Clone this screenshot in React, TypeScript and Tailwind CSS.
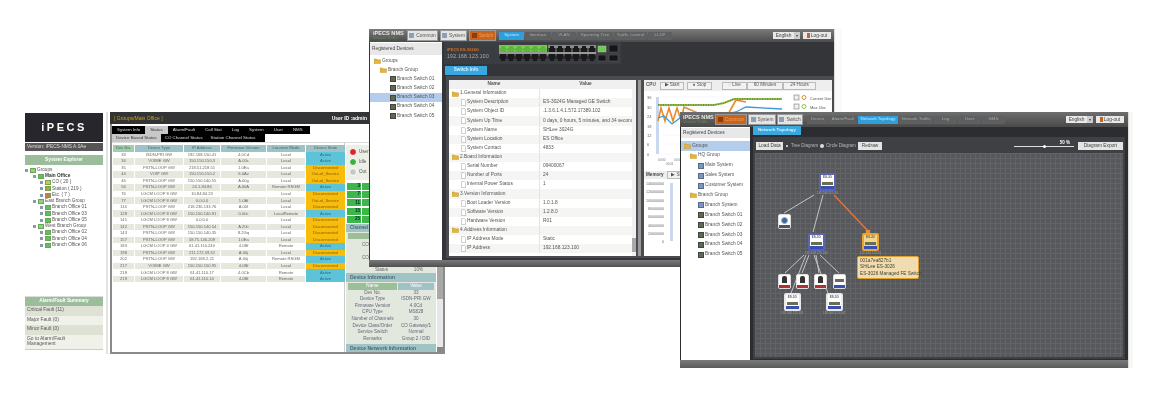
import React from "react";

const Folder = () => (
  <svg width="7" height="6" viewBox="0 0 7 6" className="shrink-0">
    <path d="M0 1h2.5l.6.8H6.5V5.6H0z" fill="#e2b63e" stroke="#b58a20" strokeWidth=".4" />
  </svg>
);
const Doc = () => (
  <svg width="5" height="7" viewBox="0 0 5 7" className="shrink-0">
    <path d="M.4.4H3.3L4.6 1.7V6.6H.4z" fill="#fff" stroke="#999" strokeWidth=".5" />
  </svg>
);
const SwitchIcon = () => <span className="w-[6px] h-[6px] shrink-0 bg-[#5b6b4e] border border-[#444]" />;
const SysIcon = () => <span className="w-[6px] h-[6px] shrink-0 bg-[#7b94c2] border border-[#5a6b8a]" />;
const Sq = ({ c }: { c: string }) => <span className={`w-[6px] h-[5px] shrink-0 border border-[#6aa55a] ${c}`} />;

const rows: [string, string, string, string, string, string][] = [
  ["33", "ISDN-PRI GW", "192.168.150.41", "4.0Cd", "Local", "Active"],
  ["34", "VOIME GW", "150.150.150.3", "A.00c", "Local", "Active"],
  ["35", "PSTN-LOOP GW", "218.51.218.51", "1.0Ea", "Local", "Disconnected"],
  ["44", "VOIP GW", "150.150.150.2", "6.0Av", "Local", "Out-of_Service"],
  ["46", "PSTN-LOOP GW", "150.150.140.55", "A.00g", "Local", "Out-of_Service"],
  ["56", "PSTN-LOOP GW", "24.1.84.86", "A.00A", "Remote RSGM", "Active"],
  ["76", "LGCM LOOP 8 GW", "10.84.84.23", "", "Local", "Disconnected"],
  ["77", "LGCM LOOP 8 GW", "0.0.0.0", "1.0Af", "Local", "Out-of_Service"],
  ["114", "PSTN-LOOP GW", "218.236.133.76", "A.00I", "Local", "Disconnected"],
  ["128", "LGCM LOOP 8 GW", "150.150.140.91", "0.00c", "LocalRemote", "Active"],
  ["141", "LGCM LOOP 8 GW", "0.0.0.0", "", "Local", "Disconnected"],
  ["142", "PSTN-LOOP GW", "150.150.140.54", "A.2Gr", "Local", "Disconnected"],
  ["143", "PSTN-LOOP GW", "150.150.140.35", "8.2Gq", "Local", "Disconnected"],
  ["157", "PSTN-LOOP GW", "58.75.146.209", "1.0Ea", "Local", "Disconnected"],
  ["183", "LGCM LOOP 4 GW", "61.41.110.240", "4.0Bf", "Remote", "Active"],
  ["198", "PSTN-LOOP GW", "211.172.59.32", "A.00j", "Local", "Disconnected"],
  ["202", "PSTN-LOOP GW", "192.168.2.21", "A.00j", "Remote RSGM", "Active"],
  ["217", "VOIME GW", "150.150.150.95", "4.0Bf", "Local", "Disconnected"],
  ["218", "LGCM LOOP 8 GW", "61.41.110.17", "4.0Cb", "Remote", "Active"],
  ["219", "LGCM LOOP 8 GW", "61.41.110.14", "4.0Bf", "Remote", "Active"],
];

const treeOne: [number, string, string][] = [
  [0, "Groups", "bg-[#8fd07a]"],
  [8, "Main Office", "bg-[#5fc05f]"],
  [15, "CO ( 20 )", "bg-[#e8c030]"],
  [15, "Station ( 219 )", "bg-[#c89a30]"],
  [15, "Etc. ( 7 )", "bg-[#d07a30]"],
  [8, "East Branch Group", "bg-[#8fd07a]"],
  [15, "Branch Office 01", "bg-[#5fc05f]"],
  [15, "Branch Office 03", "bg-[#5fc05f]"],
  [15, "Branch Office 05", "bg-[#5fc05f]"],
  [8, "West Branch Group", "bg-[#8fd07a]"],
  [15, "Branch Office 02", "bg-[#5fc05f]"],
  [15, "Branch Office 04", "bg-[#5fc05f]"],
  [15, "Branch Office 06", "bg-[#5fc05f]"],
];

function WindowOne() {
  const stateCls: Record<string, string> = {
    Active: "bg-[#5cc3d8] text-[#2a6a80]",
    Disconnected: "bg-[#f8bd0c] text-[#8a5a00]",
    "Out-of_Service": "bg-[#f8bd0c] text-[#8a5a00]",
  };
  return (
    <div className="absolute left-[25px] top-[112px] w-[420px] h-[242px] flex text-[4.6px] leading-none text-[#666]">
      <div className="w-[78px] flex flex-col pt-px">
        <div className="h-[29px] bg-[#26262c] flex items-center justify-center">
          <span className="text-[11px] tracking-[2.5px] font-bold text-white">iPECS</span>
        </div>
        <div className="mt-px h-[8px] bg-[#555] text-[#ddd] flex items-center px-[2px] text-[4.8px]">Version: iPECS-NMS A.0Ae</div>
        <div className="mt-[4px] h-[10px] bg-[#9cbd9c] text-white font-bold flex items-center justify-center text-[4.8px]">System Explorer</div>
        <div className="mt-[2px] flex flex-col">
          {treeOne.map(([ind, t, c]) => (
            <div key={t} className="h-[6.25px] flex items-center gap-[2px] text-[4.7px] text-[#555]">
              <span style={{ width: ind }} className="shrink-0 -mr-[2px]" />
              <span className="w-[3px] h-[3px] bg-[#89a] shrink-0" />
              <Sq c={c} />
              <span className={t === "Main Office" ? "font-bold text-[#333] -ml-px" : "-ml-px"}>{t}</span>
            </div>
          ))}
        </div>
        <div className="mt-auto mb-[4px] flex flex-col">
          <div className="h-[10px] bg-[#9cbd9c] text-white font-bold flex items-center justify-center text-[4.8px] border-t border-[#ddd]">Alarm/Fault Summary</div>
          <div className="h-[9.5px] bg-[#dde2d4] flex items-center px-[2px] text-[4.9px] text-[#555]">Critical Fault (11)</div>
          <div className="h-[9.5px] bg-[#f0f2ea] flex items-center px-[2px] text-[4.9px] text-[#555]">Major Fault (0)</div>
          <div className="h-[9.5px] bg-[#dde2d4] flex items-center px-[2px] text-[4.9px] text-[#555]">Minor Fault (0)</div>
          <div className="h-[15.5px] bg-[#f0f2ea] flex items-center px-[2px] text-[4.9px] text-[#555] border-b border-[#ccc]">Go to Alarm/Fault<br />Management</div>
        </div>
      </div>
      <div className="ml-[3px] w-[2px] bg-[#e2e2e2]" />
      <div className="ml-[2px] flex-1 border-2 border-[#8a8a8a] border-t-0 flex flex-col bg-white">
        <div className="h-[12px] -mx-[2px] bg-[#333435] flex items-center justify-between pl-[4px] pr-[78px] text-[5px] shrink-0">
          <span className="text-[#c9a020]">[ Groups/Main Office ]</span>
          <span className="text-white font-bold">User ID :admin</span>
        </div>
        <div className="mt-[2px] w-[198px] h-[8px] bg-black text-[#ddd] flex items-center text-[4.4px] shrink-0">
          {["System Info", "Status", "Alarm/Fault", "Call Stat", "Log", "System", "User", "NMS"].map((t) => (
            <span key={t} className={`h-full flex items-center px-[5px] ${t === "Status" ? "bg-[#c8c8c8] text-[#333]" : ""}`}>{t}</span>
          ))}
        </div>
        <div className="w-[153px] h-[8px] bg-black text-[#ddd] flex items-center text-[4.4px] shrink-0">
          {["Device Based Status", "CO Channel Status", "Station Channel Status"].map((t, i) => (
            <span key={t} className={`h-full flex items-center px-[4px] ${i === 0 ? "bg-[#c8c8c8] text-[#333]" : ""}`}>{t}</span>
          ))}
        </div>
        <div className="flex flex-1 border-t border-[#ddd] min-h-0">
          <div className="w-[233px] pl-[1px] pt-[2px] border-r border-[#ccc] text-[4.1px]">
            <div className="grid grid-cols-[21px_48px_36px_45px_38px_39px] gap-x-px text-center">
              {["Dev No.", "Device Type", "IP Address", "Firmware Version", "Location Mode", "Device State"].map((h, i) => (
                <div key={h} className={`h-[6.5px] flex items-center justify-center text-[#3f6a6a] ${i === 0 ? "bg-[#a5cba8]" : "bg-[#9fc2c6]"}`}>{h}</div>
              ))}
              {rows.map((r, idx) =>
                r.map((c, i) => (
                  <div
                    key={idx + "-" + i}
                    className={`h-[6.55px] flex items-center justify-center ${i === 5 ? stateCls[c] : idx % 2 ? "bg-[#e6e7dd]" : "bg-white"}`}
                  >
                    {c}
                  </div>
                ))
              )}
            </div>
          </div>
          <div className="flex-1 bg-white flex min-w-0">
            <div className="flex-1 flex flex-col text-[4.6px] px-[1px] min-w-0">
              <div className="mt-[2px] h-[35px] bg-[#ecefe6] flex flex-col gap-[2px] pl-[3px] pt-[3px] text-[#555] shrink-0">
                <div className="flex items-center gap-[2px]"><span className="w-[8px] h-[8px] rounded-full bg-[#d8262e] border border-white" />User</div>
                <div className="flex items-center gap-[2px]"><span className="w-[8px] h-[8px] rounded-full bg-[#3cb03c] border border-white" />Idle</div>
                <div className="flex items-center gap-[2px]"><span className="w-[8px] h-[8px] rounded-full bg-[#c8c8c8] border border-white" />Out</div>
              </div>
              <div className="mt-[3px] h-[41px] flex flex-col gap-[1.2px] shrink-0">
                {["3", "7", "11", "15", "25"].map((n) => (
                  <div key={n} className="flex gap-px pl-px">
                    <span className="w-[14px] h-[7px] bg-[#3cb84a] text-[#124] flex items-center justify-end pr-px font-bold">{n}</span>
                    <span className="w-[14px] h-[7px] bg-[#3cb84a]" />
                  </div>
                ))}
              </div>
              <div className="h-[8px] bg-[#a0c3c6] flex items-center px-[4px] font-bold text-[#4a6a70] shrink-0">Channel Status</div>
              <div className="h-[41px] bg-[#e2e8de] pt-[1px] flex flex-col shrink-0">
                <div className="h-[6px] mx-[2px] bg-[#9dbf98]" />
                <div className="flex-1 pl-[16px] pt-[4px] flex flex-col justify-between">
                  <span>CO</span><span>CO</span>
                  <span className="flex justify-around"><span>Status</span><span>10%</span></span>
                </div>
              </div>
              <div className="h-[9px] bg-[#a0c3c6] flex items-center px-[4px] font-bold text-[#4a6a70] text-[5px] shrink-0">Device Information</div>
              <div className="flex-1 bg-[#e2e8de] pt-[1px] px-[2px] flex flex-col text-[4.6px] text-[#667]">
                <div className="grid grid-cols-[49px_1fr] gap-x-px">
                  <span className="h-[6.6px] bg-[#9dbf98] text-center text-white leading-[6.6px]">Name</span>
                  <span className="h-[6.6px] bg-[#9fc2c6] text-center text-white leading-[6.6px]">Value</span>
                  {[
                    ["Dev No.", "33"], ["Device Type", "ISDN-PRI GW"], ["Firmware Version", "4.0Cd"], ["CPU Type", "MS828"],
                    ["Number of Channels", "30"], ["Device Class/Order", "CO Gateway/1"], ["Service Switch", "Normal"], ["Remarks", "Group 2 / DID"],
                  ].map(([a, b]) => (
                    <React.Fragment key={a}>
                      <span className="h-[6.6px] text-center leading-[6.6px]">{a}</span>
                      <span className="h-[6.6px] text-center leading-[6.6px]">{b}</span>
                    </React.Fragment>
                  ))}
                </div>
              </div>
              <div className="h-[8px] bg-[#a0c3c6] flex items-center px-[4px] font-bold text-[#4a6a70] text-[5px] shrink-0">Device Network Information</div>
            </div>
            <div className="w-[6px] bg-[#e8e8e8] flex flex-col justify-between">
              <div className="h-[150px] bg-[#a8a8a8] mt-[6px]" />
              <div className="h-[5px] bg-[#888]" />
            </div>
          </div>
        </div>
      </div>
    </div>
  );
}

function DarkTab({ children, active, className = "" }: { children: React.ReactNode; active?: boolean; className?: string }) {
  return (
    <span className={`h-[8px] flex items-center justify-center text-[4.4px] ${active ? "bg-[#2f9fdc] text-[#bfe8ff]" : "bg-[#5d5f61] text-[#a8a8a8]"} ${className}`}>
      {children}
    </span>
  );
}
function MainTab({ label, kind, className = "" }: { label: string; kind: "orange" | "light"; className?: string }) {
  return (
    <span
      className={`h-[11px] flex items-center justify-center gap-[2px] text-[4.8px] border border-[#999] ${kind === "orange" ? "bg-[#c8641c] text-[#f0a060]" : "bg-[#e4e4e2] text-[#555]"} ${className}`}
    >
      <span className={`w-[5px] h-[5px] ${kind === "orange" ? "bg-[#8a3e10]" : "bg-[#8aa0b8]"}`} />
      {label}
    </span>
  );
}
function Lang() {
  return (
    <div className="flex items-center gap-[3px] text-[4.8px] text-[#444]">
      <span className="flex h-[7px]">
        <span className="w-[21px] bg-[#e8e8e8] flex items-center justify-center">English</span>
        <span className="w-[6px] bg-[#ccc] flex items-center justify-center text-[4px]">▾</span>
      </span>
      <span className="w-[28px] h-[7px] bg-[#e8e8e8] flex items-center justify-center gap-[1px]">
        <span className="w-[3px] h-[5px] bg-[#c8641c]" />Log-out
      </span>
    </div>
  );
}

const infoRows: [number, string, string][] = [
  [0, "1.General Information", ""],
  [1, "System Description", "ES-3024G Managed GE Switch"],
  [1, "System Object ID", ".1.3.6.1.4.1.572.17389.102"],
  [1, "System Up Time", "0 days, 0 hours, 5 minutes, and 34 seconds"],
  [1, "System Name", "SHLee 3024G"],
  [1, "System Location", "ES Office"],
  [1, "System Contact", "4833"],
  [0, "2.Board Information", ""],
  [1, "Serial Number", "09400067"],
  [1, "Number of Ports", "24"],
  [1, "Internal Power Status", "1"],
  [0, "3.Version Information", ""],
  [1, "Boot Loader Version", "1.0.1.8"],
  [1, "Software Version", "1.2.8.0"],
  [1, "Hardware Version", "R01"],
  [0, "4.Address Information", ""],
  [1, "IP Address Mode", "Static"],
  [1, "IP Address", "192.168.123.100"],
];

function Ports() {
  return (
    <svg width="120" height="17" viewBox="0 0 120 17" className="shrink-0">
      <rect x="0" y="0" width="48" height="7" fill="#7cc850" />
      <rect x="49" y="0" width="48" height="7" fill="#8a8a8a" />
      <rect x="0" y="7" width="97" height="2" fill="#9a9a9a" />
      <rect x="0" y="9" width="97" height="1.5" fill="#8a8a8a" />
      {[0, 9].map((y, r) =>
        Array.from({ length: 12 }).map((_, i) => {
          const x = i * 8 + (i >= 6 ? 1 : 0);
          const green = r === 0 && i < 6;
          return (
            <path
              key={r + "-" + i}
              d={r === 0 ? `M${x + 0.5} ${y + 7}V${y + 3}h1.5v-2h4v2h1.5v4z` : `M${x + 0.5} ${y}V${y + 5}h1.5v2h4v-2h1.5v-5z`}
              fill={green ? "#5cb83a" : "#1a1a1c"}
            />
          );
        })
      )}
      <rect x="99" y="1" width="8" height="6" fill="#6ccc50" stroke="#bbb" strokeWidth=".5" />
      <rect x="110" y="0" width="9" height="7" fill="#16161a" stroke="#666" strokeWidth=".5" />
      <rect x="99" y="10" width="8" height="6" fill="#16161a" stroke="#666" strokeWidth=".5" />
      <rect x="110" y="10" width="9" height="6" fill="#16161a" stroke="#666" strokeWidth=".5" />
    </svg>
  );
}

function ToolBtn({ children, className = "" }: { children: React.ReactNode; className?: string }) {
  return <span className={`h-[8px] flex items-center justify-center gap-[1px] border border-[#bbb] bg-[#f2f2f2] text-[4.6px] text-[#555] ${className}`}>{children}</span>;
}

function WindowTwo() {
  const tree: [number, string, boolean][] = [
    [4, "Groups", true], [10, "Branch Group", true], [20, "Branch Switch 01", false], [20, "Branch Switch 02", false],
    [20, "Branch Switch 03", false], [20, "Branch Switch 04", false], [20, "Branch Switch 05", false],
  ];
  return (
    <div className="absolute left-[369px] top-[29px] w-[473px] h-[238px] flex flex-col bg-[#333538]">
      <div className="h-[13px] bg-gradient-to-b from-[#7c7c7c] to-[#4c4c4c] flex items-center pl-[4px] pr-[11px] shrink-0">
        <div className="w-[34px] flex flex-col leading-none">
          <span className="text-[5.6px] font-bold text-[#e8e8e8]">iPECS NMS</span>
          <span className="text-[4px] text-[#5e8a4e]">Version 8.0Ac</span>
        </div>
        <div className="flex items-center gap-[2px]">
          <MainTab label="Common" kind="light" className="w-[31px]" />
          <MainTab label="System" kind="light" className="w-[27px]" />
          <MainTab label="Switch" kind="orange" className="w-[27px]" />
        </div>
        <div className="ml-[3px] flex items-center gap-[1px]">
          <DarkTab active className="w-[25px]">System</DarkTab>
          <DarkTab className="w-[26px]">Interface</DarkTab>
          <DarkTab className="w-[24px]">VLAN</DarkTab>
          <DarkTab className="w-[36px]">Spanning Tree</DarkTab>
          <DarkTab className="w-[33px]">Traffic Control</DarkTab>
          <DarkTab className="w-[24px]">LLDP</DarkTab>
        </div>
        <div className="ml-auto"><Lang /></div>
      </div>
      <div className="flex-1 flex min-h-0">
        <div className="w-[72px] ml-px bg-white flex flex-col text-[4.8px] text-[#555] leading-none shrink-0">
          <div className="h-[12px] mt-px bg-[#e8e8e8] flex items-center px-[2px] text-[#444]">Registered Devices</div>
          <div className="flex flex-col pt-[1.5px]">
            {tree.map(([ind, t, f], i) => (
              <div key={t} style={{ paddingLeft: ind }} className={`h-[9.15px] flex items-center gap-[1px] ${i === 4 ? "bg-[#b4cdec]" : ""}`}>
                {f ? <Folder /> : <SwitchIcon />}
                {t}
              </div>
            ))}
          </div>
        </div>
        <div className="flex-1 flex flex-col min-w-0 pr-[8px]">
          <div className="h-[22px] ml-[2px] w-[177px] bg-[#3a3e42] flex items-center pl-[3px] pr-[2px] justify-between shrink-0">
            <div className="flex flex-col gap-[2px] leading-none">
              <span className="text-[4px] text-[#d0702a] font-bold">iPECS ES-3024G</span>
              <span className="text-[5px] text-[#b0b0b0] tracking-[.3px]">192.168.123.100</span>
            </div>
            <Ports />
          </div>
          <div className="mt-[2px] ml-[3px] w-[42px] h-[9px] bg-[#3aa8e0] text-[#d8f0ff] text-[4.6px] font-bold flex items-center justify-center shrink-0">Switch Info</div>
          <div className="flex-1 ml-[4px] mt-[1px] mb-[2px] bg-[#4a4c4f] pt-[4px] pr-[2px] pb-[2px] pl-[3px] flex min-h-0">
            <div className="w-[187px] bg-white relative text-[4.8px] leading-none text-[#555] pr-[4px] flex flex-col shrink-0">
              <div className="h-[9px] grid grid-cols-[90px_1fr] bg-[#f0f0f0] font-bold text-center items-center">
                <span>Name</span><span>Value</span>
              </div>
              {infoRows.map(([k, n, v], i) => (
                <div key={n} className={`h-[9.14px] grid grid-cols-[90px_1fr] items-center ${i % 2 ? "bg-[#f5f5f3]" : "bg-white"}`}>
                  <span className="flex items-center gap-[1px] pl-[3px]">
                    {k === 0 ? <Folder /> : <span className="pl-[9px] flex items-center"><Doc /></span>}
                    {n}
                  </span>
                  <span className="pl-[3px] border-l border-[#e4e4e4] h-full flex items-center">{v}</span>
                </div>
              ))}
              <div className="absolute right-0 top-0 bottom-0 w-[4px] bg-[#f0f0f0] flex flex-col justify-end">
                <div className="h-[14px] bg-[#a8a8a8] mb-[4px]" />
              </div>
            </div>
            <div className="ml-[2px] w-[3px] bg-[#9a9a9a] shrink-0" />
            <div className="ml-[3px] flex-1 bg-white flex flex-col min-w-0 text-[4.6px] text-[#555] leading-none">
              <div className="h-[11px] bg-[#eee] flex items-center pl-[2px] shrink-0">
                <span className="w-[13px] font-bold">CPU</span>
                <ToolBtn className="w-[24px] ml-px">▶ Start</ToolBtn>
                <ToolBtn className="w-[25px] ml-[3px]">● Stop</ToolBtn>
                <ToolBtn className="w-[25px] ml-[10px] bg-[#c4c4c4]">◌ Live</ToolBtn>
                <ToolBtn className="w-[36px]">60 Minutes</ToolBtn>
                <ToolBtn className="w-[33px]">24 Hours</ToolBtn>
              </div>
              <div className="h-[80px] relative shrink-0">
                <svg width="190" height="80" viewBox="0 0 190 80" className="absolute inset-0">
                  {[6, 16, 25, 35, 44, 53, 63].map((y, i) => (
                    <g key={y}>
                      <line x1="18" x2="140" y1={y} y2={y} stroke="#eef" strokeWidth=".6" />
                      <text x="3" y={y + 2} fontSize="4" fill="#666">{["36", "30", "24", "18", "12", "6", "0"][i]}</text>
                    </g>
                  ))}
                  <rect x="12" y="6" width="3" height="57" fill="#c9d8ee" />
                  <polyline points="14,14 70,14 80,12 90,8 138,8" fill="none" stroke="#8fc040" strokeWidth="2" />
                  <polyline points="14,14 70,14 80,12 90,8 138,8" fill="none" stroke="#222" strokeWidth=".6" strokeDasharray="1 1.5" />
                  <polyline points="14,30 17,17 21,30 25,17 29,30 33,17 37,29 40,16 70,29 82,27 92,9 102,11" fill="none" stroke="#e88a28" strokeWidth="1.6" />
                  <polyline points="14,27 20,25 28,33 36,27 60,27 92,21 102,16 138,18" fill="none" stroke="#3a9ad8" strokeWidth="1.3" />
                  <rect x="150" y="4" width="5" height="5" fill="#eee" stroke="#666" strokeWidth=".5" />
                  <circle cx="160" cy="6.5" r="2" fill="none" stroke="#e88a28" />
                  <text x="166" y="8.5" fontSize="4" fill="#555">Current Use</text>
                  <rect x="150" y="13" width="5" height="5" fill="#eee" stroke="#666" strokeWidth=".5" />
                  <circle cx="160" cy="15.5" r="2" fill="none" stroke="#8fc040" />
                  <text x="166" y="17.5" fontSize="4" fill="#555">Max Use</text>
                  {[0, 1, 2, 3].map((i) => (
                    <text key={i} x={14 + i * 8} y={i % 2 ? 74 : 70} fontSize="3" fill="#777">00:0{i}</text>
                  ))}
                </svg>
              </div>
              <div className="h-[8px] bg-[#eee] flex items-center pl-[2px] font-bold text-[#444] shrink-0">
                Memory
                <ToolBtn className="w-[24px] ml-[3px] font-normal">▶ Start</ToolBtn>
              </div>
              <div className="flex-1 relative">
                <svg width="190" height="76" viewBox="0 0 190 76" className="absolute inset-0">
                  {["140000000", "120000000", "100000000", "80000000", "60000000", "40000000", "20000000", "0"].map((t, i) => (
                    <text key={t} x="20" y={6 + i * 8.3} fontSize="3.6" fill="#666" textAnchor="end">{t}</text>
                  ))}
                  <rect x="26" y="4" width="3" height="58" fill="#c9d8ee" />
                </svg>
              </div>
            </div>
          </div>
        </div>
      </div>
      <div className="h-[7px] bg-gradient-to-b from-[#7a7a7a] to-[#505050] shrink-0" />
      <div className="absolute right-0 top-0 bottom-0 w-[8px] bg-[#fafafa] border-l border-[#ddd]" />
    </div>
  );
}

function Node({
  x, y, label, tone = "blue", tag,
}: { x: number; y: number; label?: string; tone?: "blue" | "white" | "gold"; tag?: string }) {
  const frame = tone === "blue" ? "border-[#5a64b0]" : tone === "gold" ? "border-[#e8a630]" : "border-[#e8e8e8]";
  const body = tone === "gold" ? "bg-[#f3d58e]" : "bg-white";
  return (
    <div className="absolute flex flex-col items-center" style={{ left: x, top: y }}>
      <div className={`w-[17px] h-[18px] border-2 rounded-[2px] flex flex-col items-center justify-between ${frame} ${body}`}>
        <span className="text-[3px] leading-[5px] text-[#556] font-bold">{tag ?? "ES-3G"}</span>
        <span className="w-[11px] h-[3px] bg-[#6a6e50]" />
        <span className="self-stretch h-[3px] bg-[#3a50b0]" />
      </div>
      {label && <span className="text-[3px] leading-[4px] whitespace-nowrap text-[#a0a0a0]">{label}</span>}
    </div>
  );
}
function SmallNode({ x, y, kind }: { x: number; y: number; kind: "phone" | "sw" | "globe" }) {
  return (
    <div
      className="absolute w-[13px] h-[15px] rounded-[2px] bg-white border border-[#ddd] flex flex-col items-center justify-between"
      style={{ left: x, top: y }}
    >
      {kind === "phone" && <span className="w-[5px] h-[7px] mt-px bg-[#333] rounded-t-[2px]" />}
      {kind === "sw" && <span className="w-[9px] h-[3px] mt-[4px] bg-[#666a60]" />}
      {kind === "globe" && <span className="w-[7px] h-[7px] mt-[2px] rounded-full bg-[#3a6a9a] border border-[#9ab]" />}
      <span className={`self-stretch h-[3px] ${kind === "phone" ? "bg-[#b03030]" : kind === "sw" ? "bg-[#3a50b0]" : "bg-[#555]"}`} />
    </div>
  );
}

function WindowThree() {
  const tree: [number, string, "f" | "s" | "y"][] = [
    [3, "Groups", "f"], [9, "HQ Group", "f"], [17, "Main System", "y"], [17, "Sales System", "y"], [17, "Customer System", "y"],
    [9, "Branch Group", "f"], [17, "Branch System", "y"], [17, "Branch Switch 01", "s"], [17, "Branch Switch 02", "s"],
    [17, "Branch Switch 03", "s"], [17, "Branch Switch 04", "s"], [17, "Branch Switch 05", "s"],
  ];
  const ox = 754;
  const oy = 155;
  const lines: [number, number, number, number][] = [
    [813, 197, 783, 215], [822, 197, 812, 234], [803, 257, 784, 275], [808, 257, 801, 275], [805, 257, 790, 295],
    [815, 257, 818, 275], [813, 257, 827, 295], [819, 257, 838, 275],
  ];
  return (
    <div className="absolute left-[680px] top-[112px] w-[453px] h-[256px] flex flex-col bg-[#2c2d30]">
      <div className="h-[15px] bg-gradient-to-b from-[#6e6e6e] to-[#4a4a4a] flex items-center pl-[3px] pr-[9px] shrink-0">
        <div className="w-[32px] flex flex-col leading-none">
          <span className="text-[5.6px] font-bold text-[#e8e8e8]">iPECS NMS</span>
          <span className="text-[4px] text-[#5e8a4e]">Version 8.0Ac</span>
        </div>
        <div className="flex items-center gap-[1px]">
          <MainTab label="Common" kind="orange" className="w-[32px]" />
          <MainTab label="System" kind="light" className="w-[28px]" />
          <MainTab label="Switch" kind="light" className="w-[26px]" />
        </div>
        <div className="ml-[4px] flex items-center gap-[1px]">
          <DarkTab className="w-[21px]">Device</DarkTab>
          <DarkTab className="w-[28px]">Alarm/Fault</DarkTab>
          <DarkTab active className="w-[40px]">Network Topology</DarkTab>
          <DarkTab className="w-[34px]">Network Traffic</DarkTab>
          <DarkTab className="w-[23px]">Log</DarkTab>
          <DarkTab className="w-[23px]">User</DarkTab>
          <DarkTab className="w-[23px]">NMS</DarkTab>
        </div>
        <div className="ml-auto"><Lang /></div>
      </div>
      <div className="flex-1 flex min-h-0">
        <div className="w-[69px] ml-px bg-white flex flex-col text-[4.8px] text-[#555] leading-none shrink-0">
          <div className="h-[10px] mt-px bg-[#e8e8e8] flex items-center px-[2px] text-[#444]">Registered Devices</div>
          <div className="flex flex-col pt-[3px]">
            {tree.map(([ind, t, k], i) => (
              <div key={t} style={{ paddingLeft: ind }} className={`h-[9.9px] flex items-center gap-[1px] ${i === 0 ? "bg-[#b4cdec]" : ""}`}>
                {k === "f" ? <Folder /> : k === "s" ? <SwitchIcon /> : <SysIcon />}
                {t}
              </div>
            ))}
          </div>
        </div>
        <div className="flex-1 flex flex-col min-w-0 pr-[5px]">
          <div className="mt-[-1px] ml-[3px] w-[48px] h-[9px] bg-[#3aa8e0] text-[#d8f0ff] text-[4.4px] font-bold flex items-center justify-center shrink-0">Network Topology</div>
          <div className="flex-1 mx-[3px] mt-[2px] mb-[1px] bg-[#3e4043] px-[2px] pt-[2px] pb-[2px] flex flex-col min-h-0">
            <div className="h-[14px] flex items-center text-[4.5px] text-[#b8b8b8] shrink-0">
              <span className="w-[27px] h-[8px] ml-px bg-[#e4e4e4] text-[#444] flex items-center justify-center text-[4.8px]">Load Data</span>
              <span className="ml-[2px] w-[4px] h-[4px] rounded-full bg-white border border-[#333]" />
              <span className="ml-[2px] w-[29px]">Tree Diagram</span>
              <span className="w-[4px] h-[4px] rounded-full bg-[#ddd]" />
              <span className="ml-[2px] w-[32px]">Circle Diagram</span>
              <span className="w-[24px] h-[8px] bg-[#e4e4e4] text-[#444] flex items-center justify-center text-[4.8px]">Redraw</span>
              <span className="ml-auto relative w-[60px] h-px bg-[#ddd]">
                <span className="absolute left-[29px] -top-[1px] w-[3px] h-[3px] bg-white rounded-full" />
                <span className="absolute right-[4px] -top-[6px] text-white font-bold">50 %</span>
              </span>
              <span className="ml-[4px] w-[45px] h-[8px] bg-[#e4e4e4] text-[#444] flex items-center justify-center text-[4.8px]">Diagram Export</span>
            </div>
            <div className="flex-1 relative overflow-hidden rounded-b-[2px] bg-[#56585b] bg-[linear-gradient(#616366_1px,transparent_1px),linear-gradient(90deg,#616366_1px,transparent_1px)] bg-[size:5px_5px]">
              <svg className="absolute inset-0 w-full h-full">
                {lines.map(([a, b, c, d], i) => (
                  <line key={i} x1={a - ox} y1={b - oy} x2={c - ox} y2={d - oy} stroke="#c4c4c4" strokeWidth="1" />
                ))}
                <line x1={833 - ox} y1={197 - oy} x2={867 - ox} y2={233 - oy} stroke="#e8703a" strokeWidth="1.5" />
                <rect x={865 - ox} y={232 - oy} width="4" height="3" fill="#e8902a" />
              </svg>
              <Node x={816 - ox} y={175 - oy} label="192.168.123.10" />
              <SmallNode x={777 - ox} y={216 - oy} kind="globe" />
              <Node x={804 - ox} y={235 - oy} label="192.168.123.100" />
              <Node x={859 - ox} y={235 - oy} tone="gold" label="192.168.123.26" />
              <SmallNode x={777 - ox} y={276 - oy} kind="phone" />
              <SmallNode x={795 - ox} y={276 - oy} kind="phone" />
              <SmallNode x={813 - ox} y={276 - oy} kind="phone" />
              <SmallNode x={832 - ox} y={276 - oy} kind="sw" />
              <Node x={780 - ox} y={295 - oy} tone="white" label="192.168.123.101" />
              <Node x={822 - ox} y={295 - oy} tone="white" label="192.168.123.102" />
              <div
                className="absolute w-[62px] h-[23px] rounded-[2px] bg-[#f0dcb0] border border-[#e0a030] text-[4.7px] leading-[6.4px] text-[#443] px-[2px] py-[1px]"
                style={{ left: 856 - ox, top: 258 - oy }}
              >
                <div>001a7ea827b1</div>
                <div>SHiLee ES-3026</div>
                <div>ES-3026 Managed FE Switch</div>
              </div>
            </div>
          </div>
        </div>
      </div>
      <div className="h-[8px] bg-gradient-to-b from-[#7a7a7a] to-[#5a5a5a] shrink-0" />
      <div className="absolute right-0 top-0 bottom-0 w-[5px] bg-[#f7f7f4] border-l border-[#ddd]" />
    </div>
  );
}

export default function App() {
  return (
    <div className="relative w-[1150px] h-[400px] overflow-hidden whitespace-nowrap bg-white font-['Liberation_Sans',Arial,sans-serif] blur-[0.35px]">
      <WindowOne />
      <WindowTwo />
      <WindowThree />
    </div>
  );
}
